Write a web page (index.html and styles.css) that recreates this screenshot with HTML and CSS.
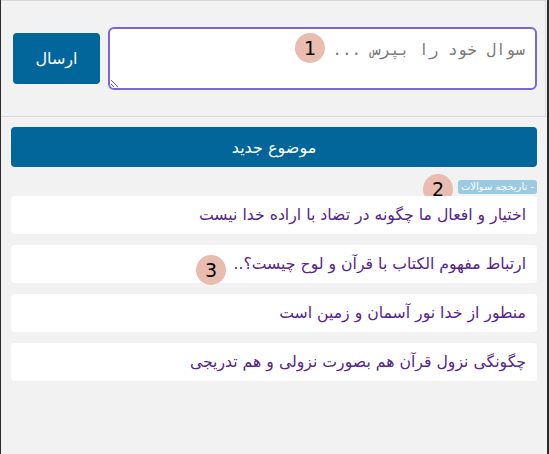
FILE: index.html
```html
<!DOCTYPE html>
<html lang="fa" dir="rtl">
<head>
<meta charset="utf-8">
<link rel="stylesheet" href="styles.css">
</head>
<body>
<div class="frame">
  <div class="ask">
    <div class="field">
      <textarea class="question" placeholder="سوال خود را بپرس ..."></textarea>
      <span class="marker m1">1</span>
    </div>
    <button class="send">ارسال</button>
  </div>
  <div class="content">
    <button class="new-topic">موضوع جدید</button>
    <div class="history-head">
      <span class="tag">- تاریخچه سوالات</span>
      <span class="marker m2">2</span>
    </div>
    <ul class="history">
      <li><a class="item" href="#">اختیار و افعال ما چگونه در تضاد با اراده خدا نیست</a></li>
      <li><a class="item" href="#">ارتباط مفهوم الکتاب با قرآن و لوح چیست؟..</a><span class="marker m3">3</span></li>
      <li><a class="item" href="#">منطور از خدا نور آسمان و زمین است</a></li>
      <li><a class="item" href="#">چگونگی نزول قرآن هم بصورت نزولی و هم تدریجی</a></li>
    </ul>
  </div>
</div>
</body>
</html>
```
FILE: styles.css
```css
html, body {
  margin: 0;
  padding: 0;
  height: 100%;
  background: #2b2b2b;
}
body {
  font-family: "DejaVu Sans", sans-serif;
}
.frame {
  margin-left: 1px;
  margin-right: 2px;
  min-height: 100%;
  background: #f2f2f2;
}
.ask {
  height: 117px;
  border: 1px solid #dcd6d9;
  border-left: none;
  margin-right: 1px;
  display: flex;
  align-items: center;
  gap: 8px;
  padding: 0 8px 0 12px;
  box-sizing: border-box;
}
.field {
  position: relative;
  flex: 1;
  display: flex;
}
.question {
  flex: 1;
  height: 63px;
  box-sizing: border-box;
  border: 2px solid #7867d6;
  border-radius: 6px;
  padding: 11px 10px;
  font-family: "DejaVu Sans Mono", monospace;
  font-size: 16px;
  color: #333;
  background: #fff;
  outline: none;
  resize: vertical;
}
.question::placeholder {
  color: #7a7a7a;
}
.send {
  width: 87px;
  height: 51px;
  border: none;
  border-radius: 4px;
  background: #02669a;
  color: #fff;
  font-family: "DejaVu Sans", sans-serif;
  font-size: 16px;
}
.content {
  padding: 10px 10px 0 10px;
}
.new-topic {
  display: block;
  width: 100%;
  height: 40px;
  border: none;
  border-radius: 4px;
  background: #02669a;
  color: #fff;
  font-family: "DejaVu Sans", sans-serif;
  font-size: 16px;
}
.history-head {
  position: relative;
  display: flex;
  align-items: flex-start;
  margin-top: 13px;
  height: 16px;
}
.tag {
  background: #9ccae3;
  color: #fff;
  font-size: 10px;
  line-height: 14px;
  padding: 0 3px;
  border-radius: 3px;
}
.history {
  list-style: none;
  margin: 0;
  padding: 0;
  display: flex;
  flex-direction: column;
  gap: 11px;
}
.history li {
  position: relative;
}
.item {
  display: block;
  height: 38px;
  line-height: 38px;
  padding: 0 11px;
  background: #fff;
  border-radius: 4px;
  color: #55248b;
  text-decoration: none;
  font-size: 15.7px;
}
.marker {
  position: absolute;
  width: 30px;
  height: 30px;
  border-radius: 50%;
  background: #e8bcaf;
  color: #000;
  font-family: "DejaVu Sans", sans-serif;
  font-size: 19px;
  line-height: 30px;
  text-align: center;
  direction: ltr;
}
.m1 {
  top: 6px;
  left: 187px;
}
.m2 {
  top: -6px;
  right: 84px;
}
.m3 {
  top: 10px;
  left: 185px;
}
```
